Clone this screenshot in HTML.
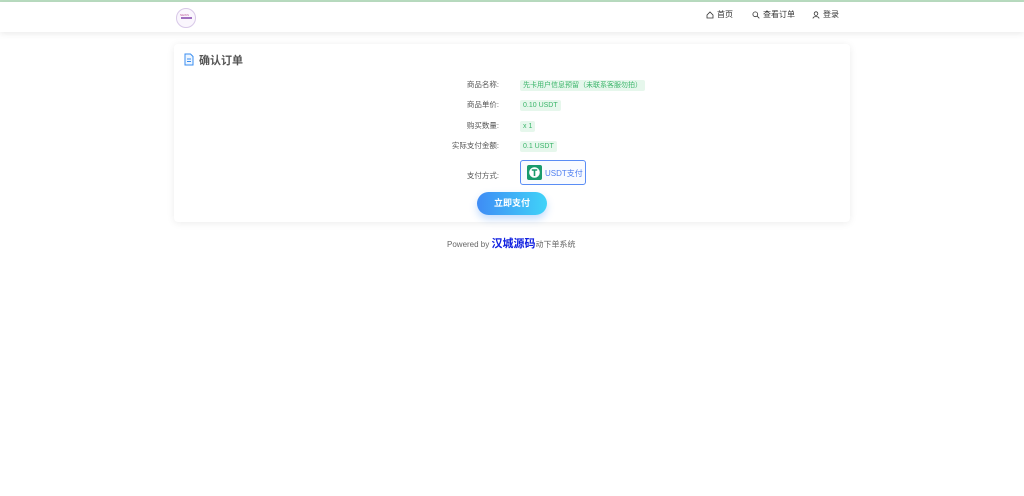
<!DOCTYPE html>
<html><head><meta charset="utf-8">
<style>
*{margin:0;padding:0;box-sizing:border-box}
body{width:1024px;height:496px;background:#fff;font-family:"Liberation Sans","Noto Sans CJK SC",sans-serif;position:relative;overflow:hidden;color:#555}
.topline{position:absolute;left:0;top:0;width:1024px;height:2px;background:#b9dcc0}
.nav{position:absolute;left:0;top:2px;width:1024px;height:30px;background:#fff;box-shadow:0 2px 6px rgba(0,0,0,.08)}
.logo{position:absolute;left:176px;top:6px;width:20px;height:20px;border-radius:50%;border:1px solid #d8c8e8;background:#faf6fd}
.logo i{position:absolute;left:4px;top:8px;width:11px;height:2px;background:#a070c0}
.menu{position:absolute;top:9px;font-size:8px;color:#333;display:flex;align-items:center;gap:3px}
.card{position:absolute;left:174px;top:44px;width:676px;height:178px;background:#fff;border-radius:4px;box-shadow:0 1px 8px rgba(0,0,0,.08)}
.title{position:absolute;left:199px;top:52px;font-size:11px;font-weight:bold;color:#555}
.lbl{position:absolute;right:525px;font-size:7.5px;color:#555;text-align:right;white-space:nowrap}
.val{position:absolute;left:520px;font-size:7px;color:#3bb56a;background:#e6f7ec;padding:1px 3px;border-radius:2px;white-space:nowrap;line-height:9px}
.pay{position:absolute;left:520px;top:160px;width:66px;height:25px;border:1.5px solid #5a8df5;border-radius:3px;background:#f9fbff}
.pay .ic{position:absolute;left:6px;top:4px;width:15px;height:15px;background:#1a9b6c;border-radius:2px}
.pay span{position:absolute;left:24px;top:7px;font-size:8px;color:#4f7ff0}
.btn{position:absolute;left:477px;top:192px;width:70px;height:23px;border-radius:12px;background:linear-gradient(90deg,#3f8cf5,#40d3f8);color:#fff;font-size:9px;font-weight:bold;text-align:center;line-height:23px;box-shadow:0 4px 8px rgba(60,140,245,.3)}
.foot{position:absolute;left:447px;top:235px;font-size:8px;color:#666;white-space:nowrap}
.foot b{color:#1020e0;font-size:11px}
</style></head><body>
<div class="topline"></div>
<div class="nav">
<div class="logo"><i></i><span style="position:absolute;left:3px;top:4px;font-size:3px;color:#c060a0">NEWS</span></div>
</div>
<div class="menu" style="left:706px"><svg width="8" height="8" viewBox="0 0 8 8"><path d="M1 4L4 1L7 4V7H1Z" fill="none" stroke="#333" stroke-width=".8"/></svg>首页</div>
<div class="menu" style="left:752px"><svg width="8" height="8" viewBox="0 0 8 8"><circle cx="3.3" cy="3.3" r="2.4" fill="none" stroke="#333" stroke-width=".8"/><path d="M5 5L7.3 7.3" stroke="#333" stroke-width=".8"/></svg>查看订单</div>
<div class="menu" style="left:812px"><svg width="8" height="8" viewBox="0 0 8 8"><circle cx="4" cy="2.6" r="1.8" fill="none" stroke="#333" stroke-width=".8"/><path d="M1 7.5C1 5 7 5 7 7.5" fill="none" stroke="#333" stroke-width=".8"/></svg>登录</div>
<div class="card"></div>
<svg style="position:absolute;left:184px;top:53px" width="10" height="13" viewBox="0 0 10 13"><path d="M1 1H6.5L9 3.5V12H1Z" fill="#eef6ff" stroke="#3a8ef0" stroke-width="1"/><path d="M3 6H7M3 8.5H7" stroke="#3a8ef0" stroke-width=".9"/></svg>
<div class="title">确认订单</div>
<div class="lbl" style="top:79px">商品名称:</div><div class="val" style="top:80px">先卡用户信息预留（未联系客服勿拍）</div>
<div class="lbl" style="top:99px">商品单价:</div><div class="val" style="top:100px">0.10 USDT</div>
<div class="lbl" style="top:120px">购买数量:</div><div class="val" style="top:121px">x 1</div>
<div class="lbl" style="top:140px">实际支付金额:</div><div class="val" style="top:141px">0.1 USDT</div>
<div class="lbl" style="top:170px">支付方式:</div>
<div class="pay"><div class="ic"><svg width="15" height="15" viewBox="0 0 15 15"><circle cx="7.5" cy="7.5" r="5.3" fill="#fff"/><path d="M4.8 5H10.2M7.5 5V11" stroke="#1a9b6c" stroke-width="1.6"/></svg></div><span>USDT支付</span></div>
<div class="btn">立即支付</div>
<div class="foot">Powered by <b>汉城源码</b>动下单系统</div>
</body></html>
